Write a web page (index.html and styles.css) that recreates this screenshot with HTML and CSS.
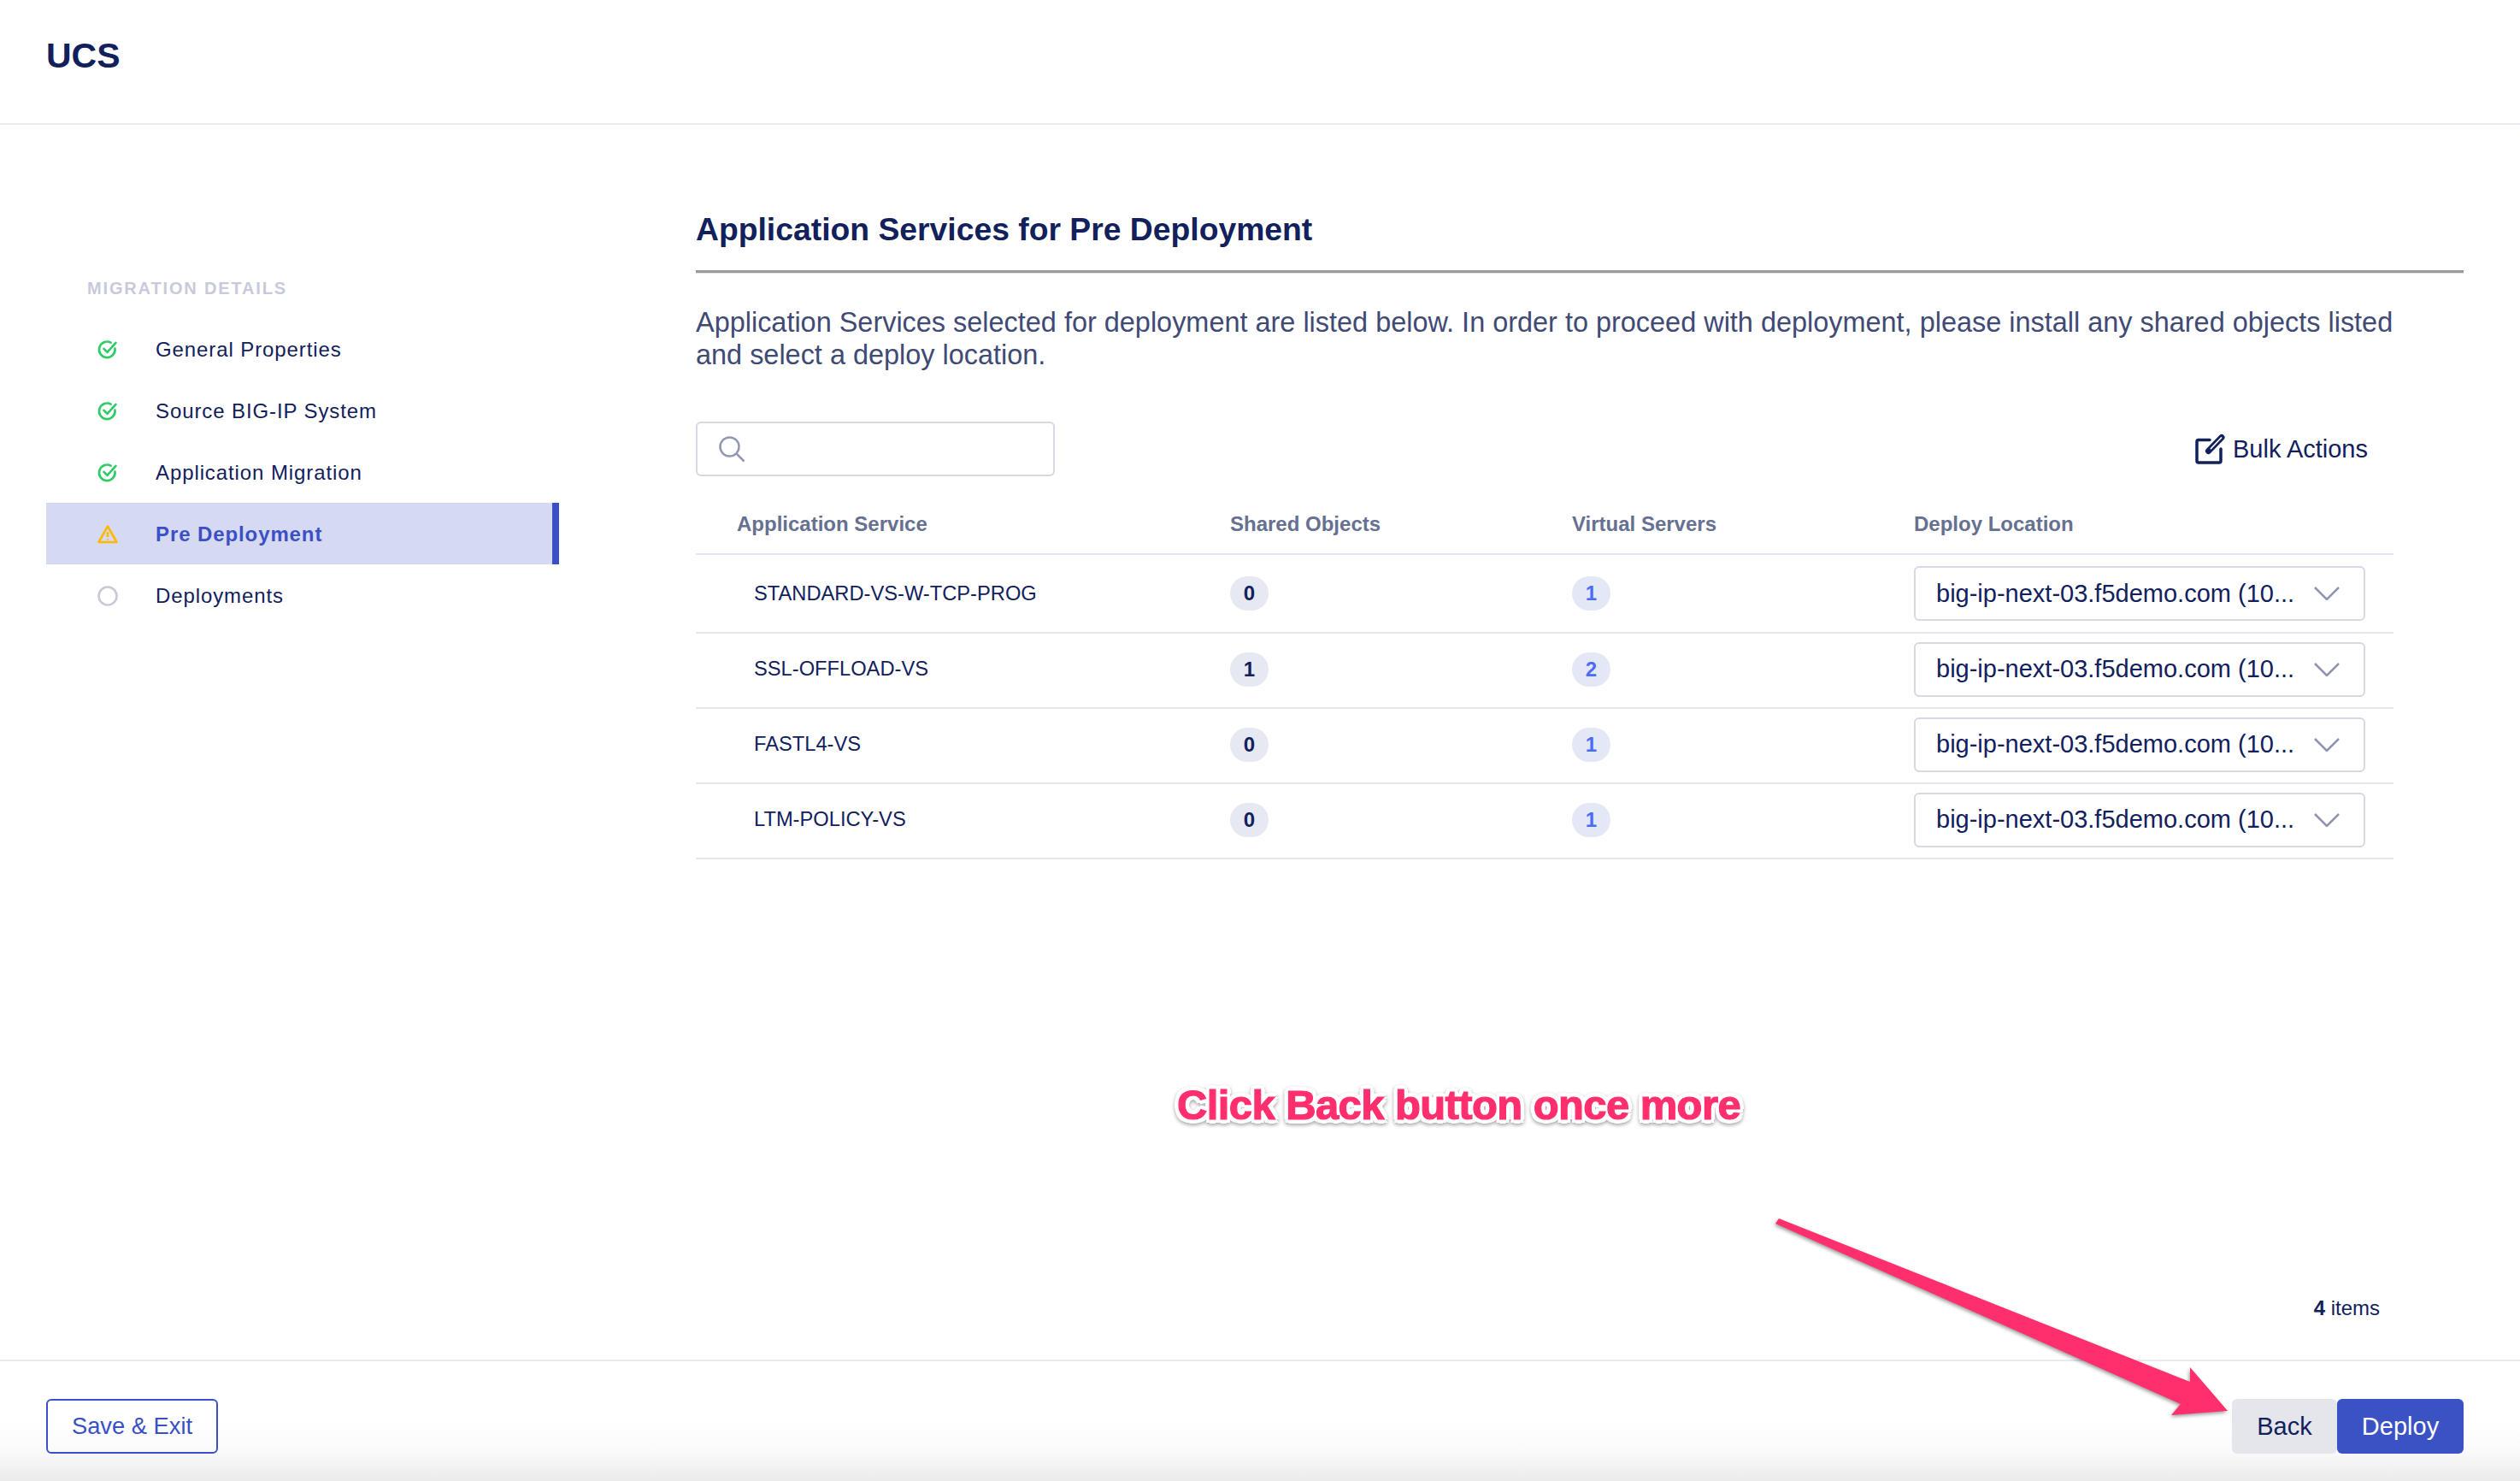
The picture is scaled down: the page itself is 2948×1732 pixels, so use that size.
FILE: index.html
```html
<!doctype html>
<html lang="en-us">
  <head>
    <meta charset="utf-8">
    <title>UCS</title>
    <link rel="stylesheet" href="styles.css">
  </head>
  <body>
    <header class="topbar">UCS</header>

    <main class="main">
      <nav class="steps">
        <div class="steps-title">MIGRATION DETAILS</div>
        <div class="step">
          <svg class="step-icon" viewBox="0 0 24 24"><path class="ok" d="M20.5 10.6A9.3 9.3 0 1 1 15.6 3.6"/><path class="ok" d="M7.5 10.8l4 4L21.5 3.8"/></svg>
          General Properties
        </div>
        <div class="step">
          <svg class="step-icon" viewBox="0 0 24 24"><path class="ok" d="M20.5 10.6A9.3 9.3 0 1 1 15.6 3.6"/><path class="ok" d="M7.5 10.8l4 4L21.5 3.8"/></svg>
          Source BIG-IP System
        </div>
        <div class="step">
          <svg class="step-icon" viewBox="0 0 24 24"><path class="ok" d="M20.5 10.6A9.3 9.3 0 1 1 15.6 3.6"/><path class="ok" d="M7.5 10.8l4 4L21.5 3.8"/></svg>
          Application Migration
        </div>
        <div class="step step-active">
          <svg class="step-icon" viewBox="0 0 24 24"><path class="warn" d="M12 2.5L1.5 21h21z"/><path class="warn" d="M12 9v6M12 17.2v1.2"/></svg>
          Pre Deployment
        </div>
        <div class="step">
          <svg class="step-icon" viewBox="0 0 24 24"><circle class="todo" cx="12" cy="12" r="10.5"/></svg>
          Deployments
        </div>
      </nav>

      <section class="content">
        <h1 class="content-title">Application Services for Pre Deployment</h1>
        <p class="intro">Application Services selected for deployment are listed below. In order to proceed with deployment, please install any shared objects listed and select a deploy location.</p>

        <div class="toolbar">
          <div class="search">
            <svg class="search-icon" viewBox="0 0 32 32"><circle cx="13.5" cy="13.5" r="11"/><path d="M21.5 21.5L30.5 30.5"/></svg>
          </div>
          <div class="bulk">
            <svg class="bulk-icon" viewBox="0 0 36 36">
              <path class="bulk-box" d="M17 7.500H4a2 2 0 0 0-2 2V32a2 2 0 0 0 2 2h24a2 2 0 0 0 2-2V18"/>
              <path class="bulk-pen" d="M15.500 20.500L31 4.500"/>
              <path class="bulk-pen-inner" d="M18.500 17.500L30.500 5"/>
            </svg>
            Bulk Actions
          </div>
        </div>

        <div class="services">
          <div class="row row-head">
            <div class="cell-name">Application Service</div>
            <div>Shared Objects</div>
            <div>Virtual Servers</div>
            <div>Deploy Location</div>
          </div>
          <div class="row row-first">
            <div class="cell-name">STANDARD-VS-W-TCP-PROG</div>
            <div><span class="chip">0</span></div>
            <div><span class="chip chip-blue">1</span></div>
            <div class="select"><span class="select-text">big-ip-next-03.f5demo.com (10...</span><svg class="chevron" viewBox="0 0 30 16"><path d="M1 1l14 14L29 1"/></svg></div>
          </div>
          <div class="row">
            <div class="cell-name">SSL-OFFLOAD-VS</div>
            <div><span class="chip">1</span></div>
            <div><span class="chip chip-blue">2</span></div>
            <div class="select"><span class="select-text">big-ip-next-03.f5demo.com (10...</span><svg class="chevron" viewBox="0 0 30 16"><path d="M1 1l14 14L29 1"/></svg></div>
          </div>
          <div class="row">
            <div class="cell-name">FASTL4-VS</div>
            <div><span class="chip">0</span></div>
            <div><span class="chip chip-blue">1</span></div>
            <div class="select"><span class="select-text">big-ip-next-03.f5demo.com (10...</span><svg class="chevron" viewBox="0 0 30 16"><path d="M1 1l14 14L29 1"/></svg></div>
          </div>
          <div class="row">
            <div class="cell-name">LTM-POLICY-VS</div>
            <div><span class="chip">0</span></div>
            <div><span class="chip chip-blue">1</span></div>
            <div class="select"><span class="select-text">big-ip-next-03.f5demo.com (10...</span><svg class="chevron" viewBox="0 0 30 16"><path d="M1 1l14 14L29 1"/></svg></div>
          </div>
        </div>

        <div class="count"><b>4</b> items</div>
      </section>
    </main>

    <footer class="actions">
      <button class="btn btn-outline">Save &amp; Exit</button>
      <div class="actions-right">
        <button class="btn btn-grey">Back</button>
        <button class="btn btn-blue">Deploy</button>
      </div>
    </footer>

    <!-- annotation drawn over the screenshot -->
    <div class="note">Click Back button once more</div>
    <svg class="arrow" viewBox="0 0 2948 1732">
      <path d="M2077 1431L2081 1425L2562 1616L2562 1599L2606 1650L2540 1655L2551 1642Z"/>
    </svg>
  </body>
</html>
```

FILE: styles.css
```css
html, body { padding: 0; margin: 0; overflow: hidden; height: 100%; }

body {
  display: flex;
  flex-direction: column;
  background: #fff;
  color: #12205c;
  font-family: "Liberation Sans", Arial, sans-serif;
}

.topbar {
  flex: none;
  box-sizing: border-box;
  height: 146px;
  padding: 44px 0 0 54px;
  border-bottom: 2px solid #e8e9ef;
  font-size: 41px;
  line-height: 42px;
  font-weight: 700;
}

.main { flex: 1; display: flex; min-height: 0; }

/* left column */
.steps { flex: none; box-sizing: border-box; width: 760px; padding: 178px 106px 0 54px; }
.steps-title {
  height: 48px;
  padding-left: 48px;
  color: #c8cadb;
  font-size: 20px;
  line-height: 26px;
  font-weight: 700;
  letter-spacing: 1.850px;
}
.step {
  display: flex;
  align-items: center;
  box-sizing: border-box;
  height: 72px;
  padding-top: 2px;
  padding-left: 60px;
  font-size: 24px;
  letter-spacing: 0.900px;
}
.step-active {
  background: #d5daf2;
  border-right: 8px solid #3a50c4;
  color: #3a50c4;
  font-weight: 700;
}
.step-icon { width: 24px; height: 24px; margin-right: 44px; overflow: visible; }
.step-icon path, .step-icon circle { fill: none; stroke-width: 2.600; }
.ok { stroke: #2ecc65; stroke-linecap: round; stroke-linejoin: round; }
.warn { stroke: #ffb900; stroke-linejoin: round; }
.todo { stroke: #c6c9d8; }

/* right column */
.content { flex: 1; padding: 100px 66px 0 54px; display: flex; flex-direction: column; position: relative; }
.content-title {
  margin: 0;
  padding-bottom: 26px;
  border-bottom: 3px solid #9a9a9a;
  box-shadow: 0 1px 0 #dfe3e8;
  font-size: 37.300px;
  line-height: 44px;
  font-weight: 700;
}
.intro {
  width: 1990px;
  margin: 39px 0 0;
  color: #3f4a75;
  font-size: 32.450px;
  line-height: 38px;
}
.toolbar { display: flex; align-items: center; justify-content: space-between; width: 1986px; margin-top: 59px; }
.search {
  display: flex;
  align-items: center;
  box-sizing: border-box;
  width: 420px;
  height: 64px;
  padding-left: 24px;
  background: #fff;
  border: 2px solid #d6d9e4;
  border-radius: 6px;
}
.search-icon { width: 32px; height: 32px; fill: none; stroke: #9297b3; stroke-width: 2.500; }
.bulk { display: flex; align-items: center; gap: 8px; padding-right: 30px; font-size: 29px; }
.bulk-icon { width: 36px; height: 36px; fill: none; stroke-linecap: round; }
.bulk-box { stroke: #12205c; stroke-width: 3.500; }
.bulk-pen { stroke: #12205c; stroke-width: 7; }
.bulk-pen-inner { stroke: #fff; stroke-width: 1.800; }

.services { width: 1986px; margin-top: 21px; }
.row {
  display: grid;
  grid-template-columns: 625px 400px 400px 1fr;
  align-items: center;
  height: 88px;
  padding-bottom: 3px;
  box-sizing: border-box;
  border-bottom: 2px solid #e6e7ee;
  font-size: 23.700px;
}
.row-first { height: 92px; padding-bottom: 0; }
.row-head { height: 71px; padding-bottom: 0; color: #667091; font-size: 24px; font-weight: 700; }
.cell-name { padding-left: 68px; }
.row-head .cell-name { padding-left: 48px; }

.chip {
  display: inline-block;
  width: 45px;
  height: 40px;
  background: #e6e8f2;
  border-radius: 20px;
  text-align: center;
  font-size: 24px;
  line-height: 40px;
  font-weight: 700;
}
.chip-blue { background: #e4e8f6; color: #4a6cf7; }

.select {
  display: flex;
  align-items: center;
  box-sizing: border-box;
  width: 528px;
  height: 64px;
  padding-left: 24px;
  background: #fff;
  border: 2px solid #d6d9e4;
  border-radius: 6px;
}
.select-text { flex: none; width: 442px; font-size: 29px; white-space: nowrap; }
.chevron { width: 30px; height: 16px; fill: none; stroke: #8f94b0; stroke-width: 2.500; }

.count { margin-top: auto; margin-bottom: 46px; width: 1970px; text-align: right; font-size: 24px; }

/* bottom bar */
.actions {
  flex: none;
  display: flex;
  align-items: flex-start;
  justify-content: space-between;
  box-sizing: border-box;
  height: 142px;
  padding: 44px 66px 0 54px;
  border-top: 2px solid #e7e9f3;
  background: linear-gradient(to bottom, #fff 0, #fff 50%, #fafafa 75%, #ebebeb 100%);
}
.actions-right { display: flex; }
.btn {
  box-sizing: border-box;
  height: 64px;
  padding: 0;
  border: 0;
  border-radius: 6px;
  font-family: inherit;
  font-size: 29px;
}
.btn-outline { width: 201px; background: transparent; border: 2px solid #3a50c4; color: #3a50c4; font-size: 27.300px; }
.btn-grey { width: 123px; background: #e5e6ec; color: #12205c; }
.btn-blue { width: 148px; background: #3b52c4; color: #fff; }

/* annotation layer */
.note {
  position: absolute;
  left: 1377px;
  top: 1260px;
  color: #ff2f6e;
  font-size: 49px;
  line-height: 64px;
  font-weight: 700;
  letter-spacing: -0.600px;
  white-space: nowrap;
  -webkit-text-stroke: 1.200px #ff2f6e;
  text-shadow:
    5px 0 0 #fff, -5px 0 0 #fff, 0 5px 0 #fff, 0 -5px 0 #fff,
    4px 4px 0 #fff, -4px 4px 0 #fff, 4px -4px 0 #fff, -4px -4px 0 #fff;
  filter: drop-shadow(0 2px 2px rgba(0, 0, 0, 0.35));
}
.arrow {
  position: absolute;
  left: 0;
  top: 0;
  width: 2948px;
  height: 1732px;
  pointer-events: none;
  fill: #ff2f6e;
  filter: drop-shadow(-1px 2px 2px rgba(0, 0, 0, 0.4));
}
```
